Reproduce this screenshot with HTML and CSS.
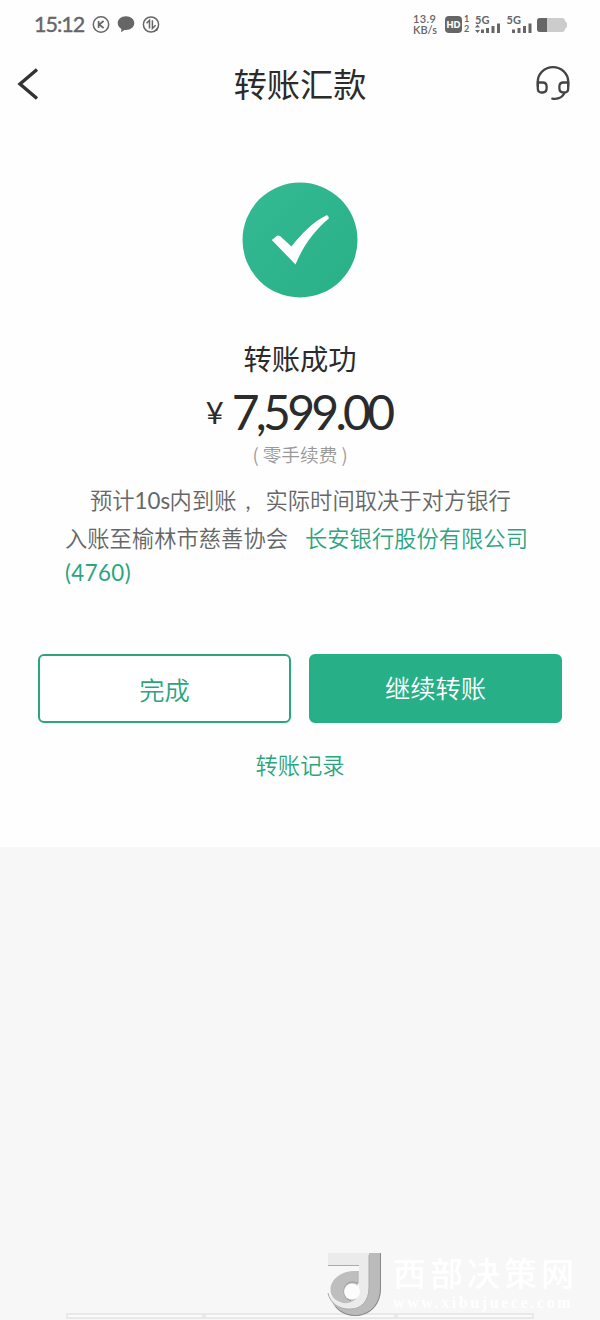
FILE: index.html
```html
<!DOCTYPE html>
<html lang="zh-CN">
<head>
<meta charset="utf-8">
<title>转账汇款</title>
<link rel="stylesheet" href="styles.css">
</head>
<body>
<main class="screen">
  <header class="status">
    <span class="clock">15:12</span>
    <svg class="status-left" width="70" height="20" viewBox="0 0 70 20" fill="none" stroke="#666" stroke-width="1.5">
      <circle cx="10" cy="10.5" r="7.7"/>
      <path d="M7.6 7v7M12.6 7l-4.4 3.5 4.4 3.5" stroke-width="1.7"/>
      <path d="M35 2.200c4.800 0 8.300 3 8.300 6.900s-3.500 7-8.300 7l-1.600-.1-3.300 2.300.300-3.200c-2.300-1.300-3.700-3.500-3.700-6 0-3.900 3.500-6.900 8.300-6.900z" fill="#666" stroke="none"/>
      <circle cx="60" cy="10.500" r="7.600"/>
      <path d="M58.500 14.500V6.200l-3 3M61.400 6.200v8.300l3.200-3.200"/>
      <path d="M62 18l5.500-5.500-1 4z" fill="#666" stroke="none"/>
    </svg>
    <span class="speed"><span class="rate">13.9</span><span>KB/s</span></span>
    <span class="hd">HD</span>
    <span class="sims"><span>1</span><span>2</span></span>
    <svg class="signals" width="102" height="22" viewBox="0 0 102 22" fill="#666">
      <text class="net" x="0" y="10">5G</text>
      <path d="M0 13.500l2.500-3 2.500 3zM0 16l2.500 3 2.500-3zM6 15.500h3v3.500h-3zM11 14h3v5h-3zM16.500 12h3v7h-3zM22 9.500h3v9.500h-3z"/>
      <text class="net" x="31.500" y="10">5G</text>
      <path d="M37 15.500h3v3.500h-3zM42.500 14h3v5h-3zM48 12h3v7h-3zM53.500 9.500h3v9.500h-3z"/>
      <path d="M65 4h22q3 0 3 3l2 2v4l-2 2q0 3-3 3h-22q-3 0-3-3v-8q0-3 3-3z" fill="#ccc"/>
      <path d="M72 4h-7q-3 0-3 3v8q0 3 3 3h7z"/>
    </svg>
  </header>

  <nav class="navbar">
    <svg width="40" height="40" viewBox="0 0 40 40" fill="none" stroke="#333" stroke-width="3.400"><path d="M37 5.500 20 20l17 14.500"/></svg>
    <h1 class="title">转账汇款</h1>
    <svg width="40" height="40" viewBox="0 0 40 40" fill="none" stroke="#444" stroke-width="2.300" stroke-linecap="round">
      <path d="M7.800 22V17.700a15.200 14.600 0 0 1 30.400 0V22"/>
      <path d="M7.800 18.500h4.800q4 0 4 4v1.800q0 4.200-4 4.200h-1q-3.800 0-3.800-4zM38.200 18.500h-4.800q-4 0-4 4v1.800q0 4.200 4 4.200h1q3.800 0 3.800-4zM34.500 29Q31 36 22.300 34.600"/>
    </svg>
  </nav>

  <section class="result">
    <svg class="success" width="116" height="116" viewBox="0 0 116 116">
      <defs><linearGradient id="disc" x1="0" y1="0" x2="1" y2="1"><stop offset="0" stop-color="#35ba93"/><stop offset="1" stop-color="#28b087"/></linearGradient></defs>
      <circle cx="58" cy="58" r="57.500" fill="url(#disc)"/>
      <path d="M29.800 58 35.500 53.500 38 54 49.500 64.500C60 51 71 40 84.500 33.200q2.300.3 2.300 3.200C72 49 61 64 53.500 82.500z" fill="#fff"/>
    </svg>
    <h2 class="headline">转账成功</h2>
    <div class="amount"><span class="yen">¥</span><span class="figure">7,599.00</span></div>
    <div class="fee"><span>(</span><span>零手续费</span><span>)</span></div>
    <div class="details">
      <p class="arrival">预计<span class="latin">10s</span>内到账<span class="comma">,</span>实际时间取决于对方银行</p>
      <p class="payee"><span>入账至榆林市慈善协会</span><span class="bank">长安银行股份有限公司</span></p>
      <p class="account">(4760)</p>
    </div>
    <div class="actions">
      <button class="button button-outline">完成</button>
      <button class="button button-solid">继续转账</button>
    </div>
    <a class="records">转账记录</a>
  </section>

  <section class="lower">
    <div class="watermark">
      <svg width="60" height="68" viewBox="0 0 60 68">
        <path d="M43 3h13v35c0 15-8 26-23 28-12 1-22-5-26-14l28 5z" fill="#bbb"/>
        <path d="M55.500 3v35c0 15-9 26-23 27.500-9 .5-17-3-22-9" fill="none" stroke="#888"/>
        <path d="M32.500 21v30c-2 3-6 4-11 3C12 52 5 48 5.500 39 6 28 18 20 32.500 21z" fill="#bebebe"/>
        <path d="M3 3h41v34c0 14-7 22-18 22C14 60 5 53 3 43c5 8 12 11 19 10 8-1 12-6 12-13V16H3z" fill="#ebebeb"/>
        <path d="M3 15.500h31M44 5v33c0 13-8 21-18 21C14 60 5 53 3 43" fill="none" stroke="#aaa"/>
        <path d="M33 21v12.500c-7-4-14 0-14 8 0 5 3 8 7 9" fill="none" stroke="#999"/>
        <circle cx="27" cy="41.500" r="8" fill="#fcfcfc"/>
      </svg>
      <div class="site"><span class="site-name">西部决策网</span><span class="site-url">www.xibujuece.com</span></div>
    </div>
    <div class="tabs"><span class="tab"></span><span class="tab tab-wide"></span><span class="tab"></span></div>
  </section>
</main>
</body>
</html>
```
FILE: styles.css
```css
* { box-sizing: border-box; }
body { margin: 0; background: #fefefe; font-family: Lato, "Noto Sans CJK SC", sans-serif; }
h1, h2, p { margin: 0; font-weight: 400; white-space: nowrap; }
svg { display: block; flex: none; }
.screen { width: 600px; height: 1320px; display: flex; flex-direction: column; overflow: hidden; }

.status { height: 50px; display: flex; align-items: flex-start; color: #666; padding: 12px 0 0 34px; }
.clock { width: 57px; font: 400 21.500px/24px Lato, sans-serif; letter-spacing: -1px; -webkit-text-stroke: .4px #666; }
.status-left { margin-top: 2px; }
.speed { width: 32px; margin-left: 252px; display: flex; flex-direction: column; font: 600 11px/11px Lato, sans-serif; padding-top: 1px; }
.rate { letter-spacing: .4px; }
.hd { width: 17px; height: 17px; margin-top: 4px; border-radius: 4px; background: #666; color: #fff; font: 800 9px/17px Lato, sans-serif; text-align: center; }
.sims { width: 13px; display: flex; flex-direction: column; padding: 2px 0 0 2px; font: 700 9px/10px Lato, sans-serif; }
.signals { margin-top: 2px; }
.net { font: 700 11px Lato, sans-serif; }

.navbar { height: 132px; padding: 14px 30px 0 0; display: flex; justify-content: space-between; align-items: flex-start; }
.title { font-size: 33.200px; line-height: 40px; color: #2b2b2b; margin-left: 30px; }

.result { height: 665px; display: flex; flex-direction: column; align-items: center; }
.headline { margin-top: 41px; font-size: 28.300px; line-height: 40px; color: #2b2b2b; }
.amount { height: 54px; margin: 6px 3px 0 0; display: flex; align-items: center; color: #2b2b2b; line-height: 54px; }
.yen { width: 26px; font-size: 31px; }
.figure { font-size: 48px; letter-spacing: -3.700px; }
.fee { height: 26px; margin-top: 3px; display: flex; gap: 4px; font-family: "Noto Sans CJK SC", sans-serif; font-weight: 350; font-size: 18.700px; line-height: 24px; color: #999; }
.details { align-self: stretch; padding: 16px 0 0 65px; font-size: 22.300px; font-weight: 350; color: #666; }
.details p { font-weight: inherit; }
.arrival { padding-left: 25px; line-height: 34px; display: flex; }
.latin { width: 35px; font-weight: 400; }
.comma { width: 29px; padding-left: 9px; font-weight: 400; }
.payee { margin-top: 4px; line-height: 34px; display: flex; gap: 17px; }
.bank, .account { color: #2ba57e; }
.details .account { line-height: 34px; font-weight: 400; letter-spacing: .4px; }
.actions { align-self: stretch; margin-top: 64px; padding: 0 38px; display: grid; grid-template-columns: 1fr 1fr; gap: 18px; }
.button { height: 69px; border-radius: 6px; border: 2px solid #2ba57e; padding: 0; font-family: "Noto Sans CJK SC", sans-serif; font-size: 25.300px; line-height: 36px; font-weight: 350; }
.button-outline { background: #fff; color: #2ba57e; }
.button-solid { background: #27b087; border-color: #27b087; color: #fff; padding-bottom: 3px; }
.records { margin-top: 27px; font-size: 22.300px; line-height: 32px; font-weight: 350; color: #2ba57e; }

.lower { flex: 1; background: #f7f7f7; display: flex; flex-direction: column; justify-content: flex-end; }
.watermark { height: 68px; margin: 0 0 -5px 325px; display: flex; gap: 8px; position: relative; z-index: 1; }
.site { display: flex; flex-direction: column; color: #fff; }
.site-name { font: 500 33px/44px "Noto Sans CJK SC", sans-serif; letter-spacing: 4px; white-space: nowrap; }
.site-url { font: 700 16px/18px "Liberation Serif", serif; letter-spacing: 2.600px; }
.tabs { height: 7px; padding-left: 66px; display: flex; }
.tab { width: 138px; height: 6px; background: #fbfbfb; border: 2px solid #e9e9e9; }
.tab-wide { width: 192px; }
```
